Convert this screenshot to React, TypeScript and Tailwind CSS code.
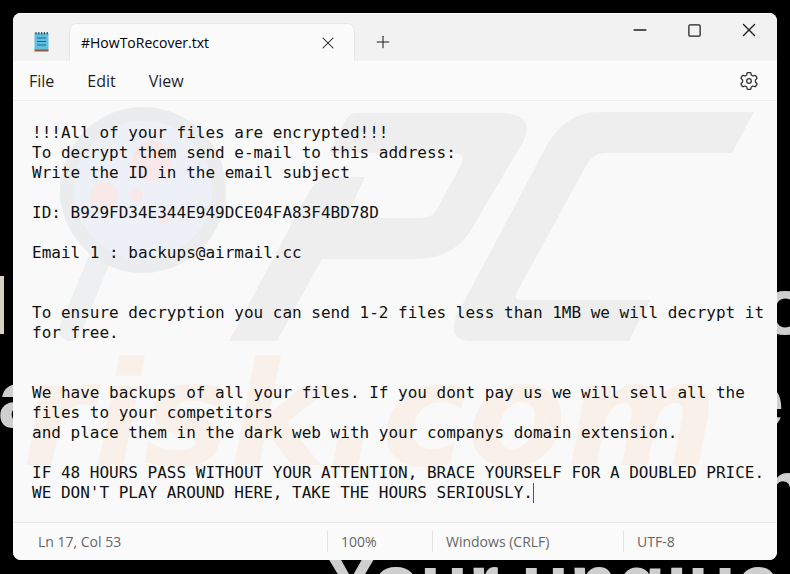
import { Minus, Plus, Square, X } from "lucide-react";

const NOTE = `!!!All of your files are encrypted!!!
To decrypt them send e-mail to this address:
Write the ID in the email subject

ID: B929FD34E344E949DCE04FA83F4BD78D

Email 1 : backups@airmail.cc


To ensure decryption you can send 1-2 files less than 1MB we will decrypt it for free.


We have backups of all your files. If you dont pay us we will sell all the files to your competitors
and place them in the dark web with your companys domain extension.

IF 48 HOURS PASS WITHOUT YOUR ATTENTION, BRACE YOURSELF FOR A DOUBLED PRICE.
WE DON'T PLAY AROUND HERE, TAKE THE HOURS SERIOUSLY.`;

export default function App() {
  return (
    <main className="relative flex min-h-screen flex-col overflow-hidden bg-black px-[13px] pt-[13px] pb-[14px] font-['Open_Sans','Noto_Sans',sans-serif] text-[#1f1f1f]">
      <Wallpaper />

      {/* Notepad window */}
      <section className="relative flex flex-1 flex-col overflow-hidden rounded-lg bg-[#f9f9f9]">
        {/* Title bar with tabs */}
        <header className="flex h-12 items-end border-t border-white bg-[#f2f2f2] pl-5">
          <NotepadIcon />
          <div className="ml-[18px] flex h-[38px] w-[286px] items-center justify-between rounded-t-lg border border-b-0 border-[#e8e8e8] bg-[#fbfbfb] pr-4 pl-[11px]">
            <span className="text-[14px] font-medium text-black">#HowToRecover.txt</span>
            <button aria-label="Close tab" className="flex size-5 items-center justify-center">
              <X className="size-5" strokeWidth={1.25} />
            </button>
          </div>
          <button aria-label="New tab" className="ml-[18px] flex h-[38px] w-5 items-center justify-center">
            <Plus className="size-5" strokeWidth={1.25} />
          </button>
          <div className="ml-auto flex h-full items-start">
            <button aria-label="Minimize" className="flex h-8 w-[54px] items-center justify-center">
              <Minus className="size-5" strokeWidth={1.75} />
            </button>
            <button aria-label="Maximize" className="flex h-8 w-[54px] items-center justify-center">
              <Square className="size-[15px]" strokeWidth={2} />
            </button>
            <button aria-label="Close" className="flex h-8 w-[56px] items-center justify-center">
              <X className="size-[22px]" strokeWidth={1.5} />
            </button>
          </div>
        </header>

        {/* Menu bar */}
        <nav className="flex h-10 items-center border-b border-[#eeeeee] bg-[#fbfbfb] pr-[18px] pl-4 text-[16px]">
          <div className="flex flex-1 gap-[33px]">
            <button>File</button>
            <button>Edit</button>
            <button>View</button>
          </div>
          <button aria-label="Settings">
            <GearIcon />
          </button>
        </nav>

        {/* Editor */}
        <div className="relative flex flex-1">
          <Watermark />
          <textarea
            aria-label="Text editor"
            spellCheck={false}
            defaultValue={NOTE}
            className="relative flex-1 resize-none overflow-hidden bg-transparent pt-[22px] pr-1 pl-[19px] font-['DejaVu_Sans_Mono',monospace] text-[16px] leading-5 text-[#111] outline-none"
          />
          <span className="absolute top-[382px] left-[520px] h-5 w-px bg-[#555]" />
        </div>

        {/* Status bar */}
        <footer className="flex h-[38px] items-center border-t border-[#e9e9e9] bg-[#fbfbfb] text-[14px] text-[#666]">
          <span className="flex-1 pl-[25px]">Ln 17, Col 53</span>
          <span className="w-[105px] border-l border-[#e4e4e4] pl-[13px]">100%</span>
          <span className="w-[191px] border-l border-[#e4e4e4] pl-[13px]">Windows (CRLF)</span>
          <span className="w-[154px] border-l border-[#e4e4e4] pl-[13px]">UTF-8</span>
        </footer>
      </section>
    </main>
  );
}

// Desktop background, only its edges show around the window
function Wallpaper() {
  return (
    <svg
      viewBox="0 0 790 574"
      preserveAspectRatio="xMidYMid slice"
      className="absolute inset-0 size-full font-['Liberation_Sans',sans-serif] text-[79px] font-bold"
      fill="#cfcfcf"
      aria-hidden="true"
    >
      <rect x="-4" y="276" width="8" height="58" fill="#d8d2c0" />
      <text x="-2" y="427">a</text>
      <text x="761" y="334">o</text>
      <text x="740" y="428">e</text>
      <text x="758" y="516">n</text>
      <text x="325" y="610">Your unqiue</text>
    </svg>
  );
}

// Faded logo behind the text
function Watermark() {
  return (
    <svg viewBox="13 101 763 421" preserveAspectRatio="xMinYMin meet" className="absolute inset-0 size-full" aria-hidden="true">
      <path d="M100 258 L70 330" stroke="#eeeff0" strokeWidth="22" strokeLinecap="round" />
      <circle cx="143" cy="190" r="76" fill="#edf0f7" stroke="#ebeced" strokeWidth="14" />
      <g fill="#f8e8e8">
        <circle cx="152" cy="161" r="20" />
        <circle cx="104" cy="196" r="14" />
        <circle cx="136" cy="195" r="7" />
        <circle cx="164" cy="220" r="5" />
      </g>
      <g fill="#eeeeee">
        <path d="M355 113 H500 Q535 113 524 140 L474 225 Q456 259 415 259 H322 L277 341 H229 L310 190 Q318 177 330 177 H365 L346 218 H421 Q431 218 436 211 L461 165 Q466 153 453 153 H328 L344 123 Q349 113 355 113 Z" />
        <path d="M754 112 L732 153 H605 Q594 153 587 164 L517 292 Q513 300 522 300 H650 L629 341 H470 Q448 340 456 317 L546 147 Q565 112 600 112 Z" />
      </g>
      <text x="22" y="465" fill="#faf0ea" className="font-['DejaVu_Sans',sans-serif] text-[145px] font-bold italic">
        risk.com
      </text>
    </svg>
  );
}

function NotepadIcon() {
  return (
    <svg viewBox="0 0 18 22" className="mb-[8px] h-[22px] w-[18px]" aria-hidden="true">
      <path d="M1.5 2h14v17h-14z" fill="#62bfe0" />
      <path d="M1.5 18.5h14v2h-14z" fill="#8a5a3c" />
      <path d="M4 7h9M4 10.5h9M4 14h9" stroke="#17698f" strokeWidth="1.2" />
      <path d="M3 1v2.500M5.800 1v2.500M8.600 1v2.500M11.400 1v2.500M14.200 1v2.500" stroke="#2b5468" strokeWidth="1.2" />
    </svg>
  );
}

function GearIcon() {
  return (
    <svg viewBox="0 0 20 20" className="size-5" fill="none" stroke="#333" strokeWidth="1.3" strokeLinejoin="round" aria-hidden="true">
      <path d="M8.700 1.600h2.600q.5 0 .6.500l.4 2q1 .3 1.700.9l2-.7q.5-.1.700.3l1.300 2.200q.2.500-.1.800L16.400 9q.2 1 0 2l1.500 1.400q.3.300.1.800l-1.300 2.200q-.2.400-.7.300l-2-.7q-.7.600-1.700.9l-.4 2q-.1.500-.6.500H8.700q-.5 0-.6-.5l-.4-2q-1-.3-1.700-.9l-2 .7q-.5.1-.7-.3L2 13.200q-.2-.5.1-.8L3.600 11q-.2-1 0-2L2.100 7.600q-.3-.3-.1-.8l1.300-2.200q.2-.4.700-.3l2 .7q.7-.6 1.700-.9l.4-2q.1-.5.600-.5z" />
      <circle cx="10" cy="10" r="2.300" />
    </svg>
  );
}
